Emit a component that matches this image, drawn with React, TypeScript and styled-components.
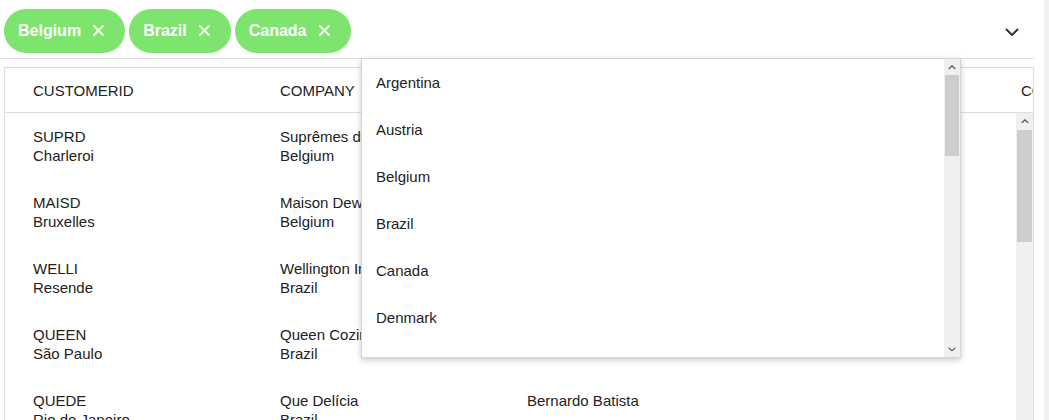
import styled, { createGlobalStyle } from "styled-components";

const GlobalStyle = createGlobalStyle`
  html, body {
    margin: 0;
    padding: 0;
    background: #fff;
    overflow: hidden;
  }
  body {
    font-family: "Liberation Sans", Arial, sans-serif;
    color: #222;
  }
`;

const Page = styled.div`
  display: flex;
  width: 1049px;
  height: 420px;
  overflow: hidden;
`;

const Main = styled.div`
  position: relative;
  width: 1034px;
  flex-shrink: 0;
`;

const EdgeStrip = styled.div`
  margin-left: auto;
  width: 5px;
  background: #f1f1f1;
`;

const TagBar = styled.div`
  display: flex;
  align-items: center;
  gap: 4px;
  height: 59px;
  padding: 9px 15px 6px 4px;
  box-sizing: border-box;
  border-bottom: 1px solid #dedede;
`;

const Chip = styled.div`
  display: flex;
  align-items: center;
  gap: 12px;
  height: 44px;
  padding: 0 21px 0 14px;
  border-radius: 22px;
  background: #7de56d;
  color: #fff;
  font-size: 16px;
  font-weight: bold;
  box-sizing: border-box;
`;

const ChevronWrap = styled.div`
  margin-left: auto;
  display: flex;
  align-items: center;
  padding-top: 4px;
`;

const Grid = styled.div`
  margin: 8px 0 0 4px;
  width: 1030px;
  border: 1px solid #dedede;
  border-bottom: none;
  box-sizing: border-box;
`;

const HeaderRow = styled.div`
  display: flex;
  height: 45px;
  border-bottom: 1px solid #dedede;
  box-sizing: border-box;
  overflow: hidden;
`;

const HeaderCell = styled.div`
  flex: 0 0 247px;
  padding-left: 28px;
  box-sizing: border-box;
  display: flex;
  align-items: center;
  font-size: 15px;
  white-space: nowrap;
`;

const Body = styled.div`
  display: flex;
  height: 320px;
`;

const Rows = styled.div`
  flex: 1;
  overflow: hidden;
`;

const Row = styled.div`
  display: flex;
  height: 66px;
  padding-top: 14px;
  box-sizing: border-box;
`;

const Cell = styled.div`
  flex: 0 0 247px;
  padding-left: 28px;
  box-sizing: border-box;
  font-size: 15px;
  line-height: 19px;
  white-space: nowrap;
`;

const ScrollBar = styled.div<{ $width: number }>`
  flex: 0 0 ${({ $width }) => $width}px;
  display: flex;
  flex-direction: column;
  background: #f0f0f0;
`;

const ScrollArrow = styled.div`
  height: 16px;
  display: flex;
  align-items: center;
  justify-content: center;
  flex-shrink: 0;
`;

const Thumb = styled.div<{ $height: number; $offset: number }>`
  height: ${({ $height }) => $height}px;
  margin: ${({ $offset }) => $offset}px 1px 0;
  background: #cdcdcd;
  flex-shrink: 0;
`;

const Spacer = styled.div`
  flex: 1;
`;

const Dropdown = styled.div`
  position: absolute;
  left: 361px;
  top: 58px;
  width: 600px;
  height: 300px;
  display: flex;
  background: #fff;
  border: 1px solid #d6d6d6;
  box-sizing: border-box;
  box-shadow: 0 2px 6px rgba(0, 0, 0, 0.22);
  z-index: 5;
`;

const OptionList = styled.div`
  flex: 1;
  overflow: hidden;
`;

const Option = styled.div`
  height: 47px;
  display: flex;
  align-items: center;
  padding-left: 14px;
  font-size: 15px;
  color: #222;
`;

const CloseIcon = () => (
  <svg width="11" height="11" viewBox="0 0 11 11">
    <path d="M1 1 L10 10 M10 1 L1 10" stroke="#fff" strokeWidth="1.8" strokeLinecap="round" />
  </svg>
);

const Chevron = ({ up, color = "#333", size = 14 }: { up?: boolean; color?: string; size?: number }) => (
  <svg width={size} height={size * 0.6} viewBox="0 0 14 8.4">
    <path
      d={up ? "M1.5 7 L7 1.5 L12.5 7" : "M1.5 1.5 L7 7 L12.5 1.5"}
      stroke={color}
      strokeWidth={up ? 2.4 : 2}
      fill="none"
      strokeLinecap="round"
      strokeLinejoin="round"
    />
  </svg>
);

const FakeScroll = ({ width, offset, thumb }: { width: number; offset: number; thumb: number }) => (
  <ScrollBar $width={width}>
    <ScrollArrow>
      <Chevron up color="#606060" size={8} />
    </ScrollArrow>
    <Thumb $height={thumb} $offset={offset} />
    <Spacer />
    <ScrollArrow>
      <Chevron color="#606060" size={8} />
    </ScrollArrow>
  </ScrollBar>
);

const chips = ["Belgium", "Brazil", "Canada"];

const headers = ["CUSTOMERID", "COMPANY", "CONTACT", "PHONE", "COUNTRY"];

const customers = [
  ["SUPRD", "Charleroi", "Suprêmes délices", "Belgium", "Pascale Cartrain"],
  ["MAISD", "Bruxelles", "Maison Dewey", "Belgium", "Catherine Dewey"],
  ["WELLI", "Resende", "Wellington Importadora", "Brazil", "Paula Parente"],
  ["QUEEN", "São Paulo", "Queen Cozinha", "Brazil", "Lúcia Carvalho"],
  ["QUEDE", "Rio de Janeiro", "Que Delícia", "Brazil", "Bernardo Batista"],
];

const countries = ["Argentina", "Austria", "Belgium", "Brazil", "Canada", "Denmark", "Finland"];

export default function App() {
  return (
    <>
      <GlobalStyle />
      <Page>
        <Main>
          <TagBar>
            {chips.map((c) => (
              <Chip key={c}>
                {c}
                <CloseIcon />
              </Chip>
            ))}
            <ChevronWrap>
              <Chevron />
            </ChevronWrap>
          </TagBar>
          <Grid>
            <HeaderRow>
              {headers.map((h) => (
                <HeaderCell key={h}>{h}</HeaderCell>
              ))}
            </HeaderRow>
            <Body>
              <Rows>
                {customers.map((c) => (
                  <Row key={c[0]}>
                    <Cell>
                      {c[0]}
                      <br />
                      {c[1]}
                    </Cell>
                    <Cell>
                      {c[2]}
                      <br />
                      {c[3]}
                    </Cell>
                    <Cell>{c[4]}</Cell>
                    <Cell />
                  </Row>
                ))}
              </Rows>
              <FakeScroll width={17} offset={1} thumb={112} />
            </Body>
          </Grid>
          <Dropdown>
            <OptionList>
              {countries.map((c) => (
                <Option key={c}>{c}</Option>
              ))}
            </OptionList>
            <FakeScroll width={16} offset={0} thumb={81} />
          </Dropdown>
        </Main>
        <EdgeStrip />
      </Page>
    </>
  );
}
